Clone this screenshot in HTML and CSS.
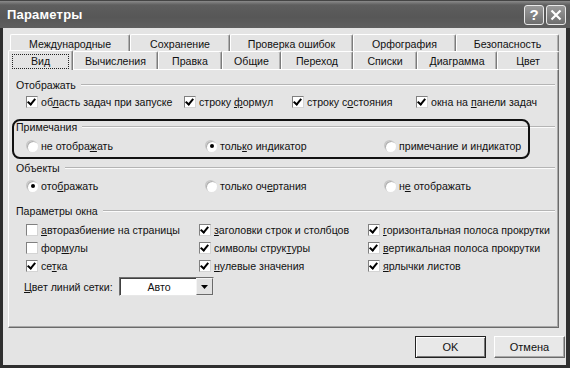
FILE: index.html
```html
<!DOCTYPE html>
<html lang="ru">
<head>
    <meta charset="UTF-8">
    <title>Параметры</title>
    <link rel="stylesheet" href="styles.css">
</head>
<body>
    <div class="window">
        <div class="titlebar">
            <span class="title">Параметры</span>
            <div class="tb-buttons">
                <span class="tb-btn help">?</span>
                <span class="tb-btn close">
                    <svg width="12" height="12" viewBox="0 0 12 12"><path d="M1.5 1.5 L10.5 10.5 M10.5 1.5 L1.5 10.5" stroke="#fff" stroke-width="2.2"/></svg>
                </span>
            </div>
        </div>
        <div class="frame">
            <div class="tabs">
                <div class="tab-row back">
                    <div class="tab w120">Международные</div>
                    <div class="tab w100">Сохранение</div>
                    <div class="tab w123">Проверка ошибок</div>
                    <div class="tab w103">Орфография</div>
                    <div class="tab w103">Безопасность</div>
                </div>
                <div class="tab-row front">
                    <div class="tab w65 active"><span class="focus">Вид</span></div>
                    <div class="tab w85">Вычисления</div>
                    <div class="tab w64">Правка</div>
                    <div class="tab w59">Общие</div>
                    <div class="tab w72">Переход</div>
                    <div class="tab w64">Списки</div>
                    <div class="tab w80">Диаграмма</div>
                    <div class="tab w62">Цвет</div>
                </div>
            </div>

            <div class="panel">
                <div class="legend first">Отображать</div>
                <div class="opts show-row">
                    <label class="opt"><span class="chk on"></span><span>об<u>л</u>асть задач при запуске</span></label>
                    <label class="opt"><span class="chk on"></span><span>строку <u>ф</u>ормул</span></label>
                    <label class="opt"><span class="chk on"></span><span>строку с<u>о</u>стояния</span></label>
                    <label class="opt"><span class="chk on"></span><span>окна на <u>п</u>анели задач</span></label>
                </div>

                <div class="legend gap8">Примечания</div>
                <div class="opts radio-row gap2">
                    <label class="opt"><span class="radio"></span><span>не отобра<u>ж</u>ать</span></label>
                    <label class="opt"><span class="radio on"></span><span>толь<u>к</u>о индикатор</span></label>
                    <label class="opt"><span class="radio"></span><span>примечание и ин<u>д</u>икатор</span></label>
                </div>

                <div class="legend gap5">Объекты</div>
                <div class="opts radio-row gap1">
                    <label class="opt"><span class="radio on"></span><span>ото<u>б</u>ражать</span></label>
                    <label class="opt"><span class="radio"></span><span>только оч<u>е</u>ртания</span></label>
                    <label class="opt"><span class="radio"></span><span>н<u>е</u> отображать</span></label>
                </div>

                <div class="legend gap8">Параметры окна</div>
                <div class="opts win-row gap2">
                    <label class="opt"><span class="chk"></span><span><u>а</u>вторазбиение на страницы</span></label>
                    <label class="opt"><span class="chk on"></span><span><u>з</u>аголовки строк и столбцов</span></label>
                    <label class="opt"><span class="chk on"></span><span><u>г</u>оризонтальная полоса прокрутки</span></label>
                </div>
                <div class="opts win-row">
                    <label class="opt"><span class="chk"></span><span>фор<u>м</u>улы</span></label>
                    <label class="opt"><span class="chk on"></span><span>символы струк<u>т</u>уры</span></label>
                    <label class="opt"><span class="chk on"></span><span><u>в</u>ертикальная полоса прокрутки</span></label>
                </div>
                <div class="opts win-row">
                    <label class="opt"><span class="chk on"></span><span>се<u>т</u>ка</span></label>
                    <label class="opt"><span class="chk on"></span><span><u>н</u>улевые значения</span></label>
                    <label class="opt"><span class="chk on"></span><span><u>я</u>рлычки листов</span></label>
                </div>
                <div class="color-row">
                    <span class="color-label"><u>Ц</u>вет линий сетки:</span>
                    <div class="combo">
                        <span class="combo-value">Авто</span>
                        <span class="combo-btn">
                            <svg width="7" height="4" viewBox="0 0 7 4"><path d="M0 0 H7 L3.5 4 Z" fill="#000"/></svg>
                        </span>
                    </div>
                </div>
            </div>

            <div class="buttons">
                <button class="btn default">OK</button>
                <button class="btn">Отмена</button>
            </div>
        </div>
        <div class="highlight"></div>
    </div>
</body>
</html>
```

FILE: styles.css
```css
* {
    margin: 0;
    padding: 0;
    box-sizing: border-box;
}

body {
    background: #e4e4e4;
    font-family: "Liberation Sans", "DejaVu Sans", sans-serif;
    font-size: 10.6px;
    color: #111;
}

.window {
    position: relative;
    width: 570px;
    height: 368px;
    display: flex;
    flex-direction: column;
    background: #e4e4e4;
}

/* заголовок окна */

.titlebar {
    height: 28px;
    display: flex;
    align-items: center;
    justify-content: space-between;
    padding: 0 4px 0 7px;
    background: linear-gradient(#8a8a8a 0, #5e5e5e 4px, #575757 60%, #5f5f5f 100%);
    border-top: 1px solid #444;
}

.title {
    color: #fff;
    font-weight: bold;
    font-size: 13px;
    letter-spacing: 0.2px;
}

.tb-buttons {
    display: flex;
    gap: 2px;
}

.tb-btn {
    width: 20px;
    height: 20px;
    border: 1px solid #e8e8e8;
    border-radius: 3px;
    background: linear-gradient(#9a9a9a, #6e6e6e);
    color: #fff;
    display: flex;
    align-items: center;
    justify-content: center;
    font-weight: bold;
    font-size: 15px;
}

.frame {
    flex: 1;
    display: flex;
    flex-direction: column;
    border-left: 3px solid #2f2f2f;
    border-right: 4px solid #2f2f2f;
    border-bottom: 3px solid #2f2f2f;
}

/* вкладки */

.tabs {
    margin-top: 6px;
}

.tab-row {
    display: flex;
}

.tab-row.back {
    margin-left: 7px;
    height: 17px;
}

.tab-row.front {
    margin-left: 5px;
    height: 18px;
}

.tab {
    display: flex;
    align-items: center;
    justify-content: center;
    border-top: 1px solid #fff;
    border-left: 1px solid #fff;
    border-right: 1px solid #7c7c7c;
    box-shadow: inset -1px 0 0 #b0b0b0;
    border-radius: 2px 2px 0 0;
    padding-top: 1px;
}

.tab.active {
    position: relative;
    z-index: 1;
    height: 20px;
    margin-top: -1px;
    background: #e4e4e4;
}

.focus {
    display: block;
    width: 57px;
    height: 15px;
    line-height: 13px;
    text-align: center;
    border: 1px dotted #222;
}

.w59 { width: 59px; }
.w62 { width: 62px; }
.w64 { width: 64px; }
.w65 { width: 65px; }
.w72 { width: 72px; }
.w80 { width: 80px; }
.w85 { width: 85px; }
.w100 { width: 100px; }
.w103 { width: 103px; }
.w120 { width: 120px; }
.w123 { width: 123px; }

/* панель */

.panel {
    margin-left: 5px;
    width: 551px;
    height: 259px;
    border-top: 1px solid #fff;
    border-left: 1px solid #fff;
    border-right: 1px solid #6a6a6a;
    border-bottom: 1px solid #6a6a6a;
    box-shadow: inset -1px -1px 0 #a8a8a8;
    padding: 0 3px 0 7px;
}

.legend {
    display: flex;
    align-items: center;
    height: 16px;
}

.legend::after {
    content: "";
    flex: 1;
    border-top: 1px solid #b4b4b4;
    border-bottom: 1px solid #fbfbfb;
    margin-left: 5px;
}

.legend.first { margin-top: 7px; }
.gap8 { margin-top: 8px; }
.gap5 { margin-top: 5px; }
.gap2 { margin-top: 2px; }
.gap1 { margin-top: 1px; }

.opts {
    display: grid;
    height: 18px;
    align-items: center;
    padding-left: 10px;
}

.show-row {
    grid-template-columns: 158px 108px 124px auto;
}

.radio-row {
    padding-left: 11px;
    grid-template-columns: 179px 179px auto;
}

.win-row {
    grid-template-columns: 173px 169px auto;
}

.opt {
    display: flex;
    align-items: center;
    white-space: nowrap;
}

.chk {
    width: 12px;
    height: 12px;
    margin-right: 3px;
    background: #fff;
    border: 1px solid;
    border-color: #808080 #d4d4d4 #d4d4d4 #808080;
    position: relative;
}

.chk.on::after {
    content: "";
    position: absolute;
    left: 2px;
    top: 0px;
    width: 3px;
    height: 6px;
    border-right: 2px solid #000;
    border-bottom: 2px solid #000;
    transform: rotate(40deg);
}

.radio {
    width: 11px;
    height: 11px;
    margin-right: 3px;
    border-radius: 50%;
    background: #fff;
    box-shadow: inset 1px 1px 0 #b0b0b0, -1px -1px 0 #c8c8c8;
    display: flex;
    align-items: center;
    justify-content: center;
}

.radio.on::after {
    content: "";
    width: 4px;
    height: 4px;
    border-radius: 50%;
    background: #000;
}

.color-row {
    display: flex;
    align-items: center;
    margin-top: 2px;
    padding-left: 8px;
    height: 19px;
}

.color-label {
    width: 95px;
}

.combo {
    width: 95px;
    height: 19px;
    display: flex;
    background: #fff;
    border: 1px solid;
    border-color: #707070 #e8e8e8 #e8e8e8 #707070;
    box-shadow: inset 1px 1px 0 #404040;
}

.combo-value {
    flex: 1;
    display: flex;
    align-items: center;
    justify-content: center;
    padding-left: 2px;
}

.combo-btn {
    width: 17px;
    display: flex;
    align-items: center;
    justify-content: center;
    background: #e2e2e2;
    border: 1px solid;
    border-color: #f4f4f4 #6a6a6a #6a6a6a #f4f4f4;
}

/* кнопки */

.buttons {
    display: flex;
    justify-content: flex-end;
    gap: 8px;
    margin-top: 8px;
    padding-right: 1px;
}

.btn {
    width: 71px;
    height: 22px;
    font-family: inherit;
    font-size: 11px;
    color: #111;
    background: #e8e8e8;
    border: 1px solid;
    border-color: #fff #6a6a6a #6a6a6a #fff;
    box-shadow: inset -1px -1px 0 #a8a8a8;
}

.btn.default {
    border: 1px solid #222;
    box-shadow: inset 1px 1px 0 #fff, inset -1px -1px 0 #777;
}

/* обводка поверх группы "Примечания" */

.highlight {
    position: absolute;
    left: 12px;
    top: 119px;
    width: 518px;
    height: 40px;
    border: 2px solid #111;
    border-radius: 8px;
    pointer-events: none;
}
```
